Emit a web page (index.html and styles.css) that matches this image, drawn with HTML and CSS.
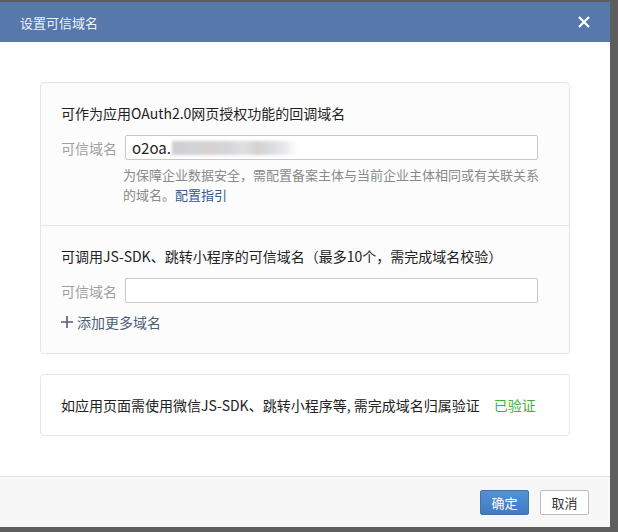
FILE: index.html
```html
<!DOCTYPE html>
<html lang="zh-CN">
<head>
<meta charset="utf-8">
<title>设置可信域名</title>
<link rel="stylesheet" href="styles.css">
</head>
<body>
<div class="dialog">
  <div class="header">
    <span class="title">设置可信域名</span>
    <svg class="close" width="12" height="12" viewBox="0 0 12 12"><path d="M1 1 L11 11 M11 1 L1 11" stroke="#fff" stroke-width="2.2" fill="none"/></svg>
  </div>
  <div class="content">
    <div class="card">
      <div class="section">
        <div class="heading">可作为应用OAuth2.0网页授权功能的回调域名</div>
        <div class="row">
          <span class="label">可信域名</span>
          <div class="input"><span class="val">o2oa.</span><span class="blur"></span></div>
        </div>
        <div class="hint">
          <div class="hint-line">为保障企业数据安全，需配置备案主体与当前企业主体相同或有关联关系</div>
          <div class="hint-line"><span>的域名。</span><span class="link">配置指引</span></div>
        </div>
      </div>
      <div class="section second">
        <div class="heading">可调用JS-SDK、跳转小程序的可信域名（最多10个，需完成域名校验）</div>
        <div class="row">
          <span class="label">可信域名</span>
          <div class="input"></div>
        </div>
        <div class="add"><svg width="12" height="12" viewBox="0 0 12 12"><path d="M6 0 V12 M0 6 H12" stroke="#4f5f77" stroke-width="1.6"/></svg><span>添加更多域名</span></div>
      </div>
    </div>
    <div class="card verify">
      <span>如应用页面需使用微信JS-SDK、跳转小程序等, 需完成域名归属验证</span><span class="ok">已验证</span>
    </div>
  </div>
  <div class="footer">
    <span class="btn primary">确定</span>
    <span class="btn">取消</span>
  </div>
</div>
</body>
</html>
```

FILE: styles.css
```css
html, body {
  margin: 0;
  padding: 0;
}
body {
  width: 618px;
  height: 532px;
  overflow: hidden;
  background: #5d5d5d;
  font-family: "Noto Sans CJK SC", "Noto Sans", sans-serif;
  font-size: 14px;
  color: #222;
}
.dialog {
  width: 610px;
  height: 525px;
  margin-top: 2px;
  background: #fff;
  display: flex;
  flex-direction: column;
}
.header {
  height: 40px;
  flex: none;
  background: #5778ab;
  display: flex;
  align-items: center;
  justify-content: space-between;
  padding: 0 20px 0 20px;
}
.title {
  color: #eef2f8;
  font-size: 13px;
}
.close {
  display: block;
}
.content {
  flex: 1;
  padding: 40px 40px 0 40px;
}
.card {
  border: 1px solid #e6e6e6;
  border-radius: 4px;
  background: #fcfcfc;
}
.section {
  padding: 20px 20px 20px 20px;
}
.section.second {
  border-top: 1px solid #e6e6e6;
  padding-bottom: 21px;
}
.heading {
  line-height: 20px;
  height: 20px;
  color: #222;
  white-space: nowrap;
}
.row {
  margin-top: 12px;
  display: flex;
  align-items: center;
}
.label {
  width: 64px;
  flex: none;
  color: #a0a0a0;
  line-height: 20px;
}
.input {
  width: 413px;
  height: 25px;
  box-sizing: border-box;
  border: 1px solid #c8c8c8;
  border-radius: 2px;
  background: #fff;
  display: flex;
  align-items: center;
  padding-left: 6px;
  overflow: hidden;
}
.val {
  color: #222;
  font-size: 15px;
}
.blur {
  display: block;
  width: 125px;
  height: 14px;
  margin-left: 1px;
  background: linear-gradient(90deg, #d4cccf 0%, #cfd3d8 15%, #d9d1cd 30%, #d3d6da 45%, #e0e0e0 58%, #d6d0cc 68%, #dadde0 80%, #ebe7ee 90%, #ffffff 100%);
  filter: blur(1.5px);
}
.hint {
  margin-top: 5px;
  margin-left: 62px;
  font-size: 13px;
  line-height: 20px;
  color: #8a8a8a;
}
.hint-line {
  height: 20px;
  white-space: nowrap;
}
.link {
  color: #3a5a8c;
}
.add {
  margin-top: 9px;
  height: 20px;
  display: flex;
  align-items: center;
  color: #4f5f77;
  line-height: 20px;
}
.add svg {
  margin-right: 4px;
}
.verify {
  margin-top: 20px;
  padding: 20px 20px 20px 20px;
  line-height: 20px;
  background: #fff;
  white-space: nowrap;
}
.ok {
  color: #3fb23a;
  margin-left: 14px;
}
.footer {
  flex: none;
  height: 50px;
  border-top: 1px solid #e2e2e2;
  background: #f7f7f7;
  display: flex;
  align-items: center;
  justify-content: flex-end;
  padding-right: 21px;
  gap: 11px;
}
.btn {
  width: 49px;
  height: 25px;
  box-sizing: border-box;
  border: 1px solid #bdbdbd;
  border-radius: 2px;
  background: #fff;
  display: flex;
  align-items: center;
  justify-content: center;
  font-size: 13px;
  color: #333;
}
.btn.primary {
  border-color: #3f73b0;
  background: linear-gradient(#5590d4, #417cc0);
  color: #fff;
}
```
